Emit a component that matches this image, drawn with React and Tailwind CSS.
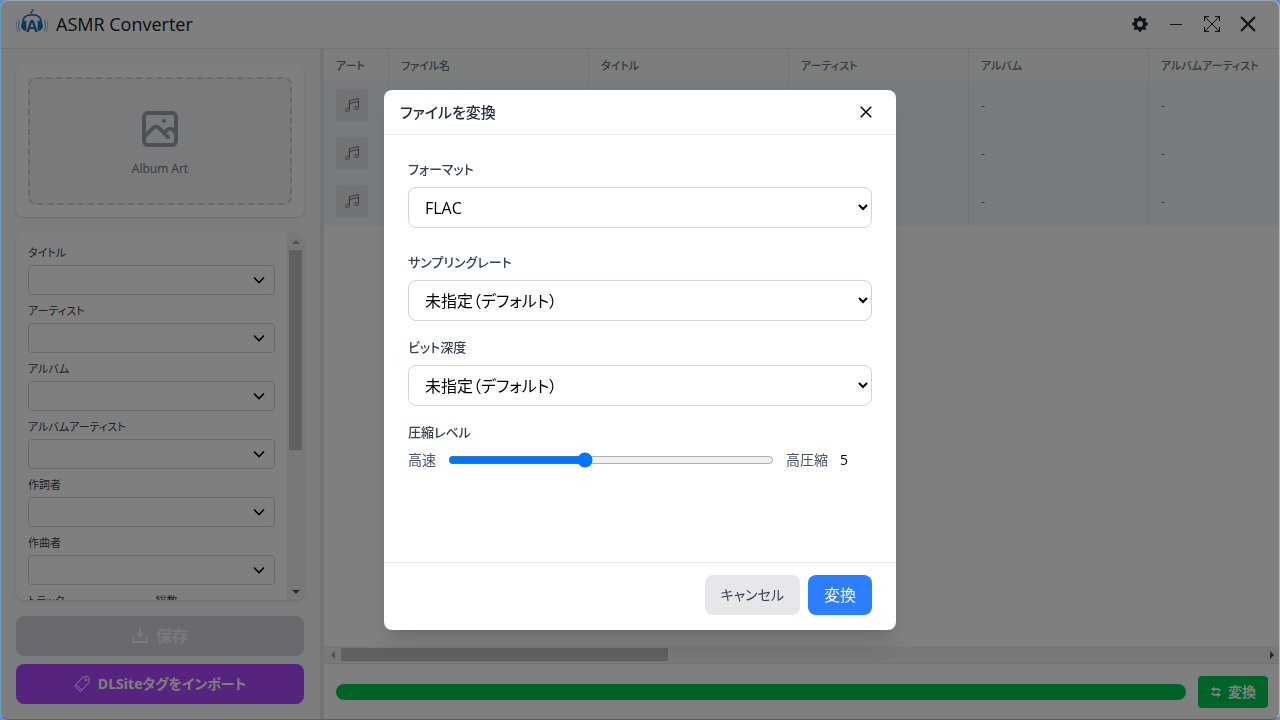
import React, { useState } from 'react';
import { BsGearFill } from 'react-icons/bs';

const FIELDS = ['タイトル', 'アーティスト', 'アルバム', 'アルバムアーティスト', '作詞者', '作曲者'];

const COLUMNS = [
    { label: 'アート', width: 'w-16' },
    { label: 'ファイル名', width: 'w-[200px]' },
    { label: 'タイトル', width: 'w-[200px]' },
    { label: 'アーティスト', width: 'w-[180px]' },
    { label: 'アルバム', width: 'w-[180px]' },
    { label: 'アルバムアーティスト', width: 'w-[180px]' },
];

const FILES = [
    { id: 1, values: ['', '', '', '-', '-'] },
    { id: 2, values: ['', '', '', '-', '-'] },
    { id: 3, values: ['', '', '', '-', '-'] },
];

const Logo = () => (
    <svg viewBox="0 0 32 32" className="w-8 h-8" fill="none" stroke="#0e6fae" strokeLinecap="round">
        <path d="M7 14C7 9 10.500 6.800 16 6.800S25 9 25 14" strokeWidth="1.600" />
        <path d="M10 13v9.500c-2.800 0-4.500-1.800-4.500-4.700S7.200 13 10 13zM22 13v9.500c2.800 0 4.500-1.800 4.500-4.700S24.800 13 22 13z" fill="#0e6fae" strokeWidth="0.600" />
        <path d="M3.600 12.500c-1.500 3-1.500 7.500 0 10.500M28.400 12.500c1.500 3 1.500 7.500 0 10.500" strokeWidth="0.900" opacity="0.700" />
        <path d="M1.800 11c-2 4-2 9 0 13M30.200 11c2 4 2 9 0 13" strokeWidth="0.700" opacity="0.500" />
        <path d="M16 4.500V1.500l1.800 1" strokeWidth="0.900" />
        <circle cx="15.200" cy="4.700" r="0.900" fill="#0e6fae" stroke="none" />
        <text x="16" y="24" textAnchor="middle" fontFamily="Liberation Sans, sans-serif" fontSize="17" fontWeight="700" fill="#0e6fae" stroke="none">A</text>
    </svg>
);

const PhotoIcon = () => (
    <svg viewBox="0 0 24 24" className="w-12 h-12 text-gray-400" fill="none" stroke="currentColor" strokeWidth="2" strokeLinecap="round" strokeLinejoin="round">
        <path d="M4 16l4.586-4.586a2 2 0 012.828 0L16 16m-2-2l1.586-1.586a2 2 0 012.828 0L20 14m-6-6h.01M6 20h12a2 2 0 002-2V6a2 2 0 00-2-2H6a2 2 0 00-2 2v12a2 2 0 002 2z" />
    </svg>
);

const MusicIcon = () => (
    <svg viewBox="0 0 16 16" className="w-4 h-4" fill="none" stroke="currentColor" strokeLinejoin="round">
        <path d="M5.500 12.500V3.500l9-2v9.500M5.500 6.500l9-2" />
        <ellipse cx="3.500" cy="12.700" rx="2" ry="1.600" />
        <ellipse cx="12.500" cy="11.200" rx="2" ry="1.600" />
    </svg>
);

const ExpandIcon = () => (
    <svg viewBox="0 0 16 16" className="w-4 h-4" fill="none" stroke="currentColor">
        <path d="M.5 5V.5H5M11 .5h4.500V5M15.500 11v4.500H11M5 15.500H.5V11M.5.5l15 15M15.500.5l-15 15" />
    </svg>
);

const CloseIcon = ({ className, strokeWidth }) => (
    <svg viewBox="0 0 16 16" className={className} fill="none" stroke="currentColor" strokeWidth={strokeWidth}>
        <path d="M1 1l14 14M15 1L1 15" />
    </svg>
);

const SaveIcon = () => (
    <svg viewBox="0 0 16 16" className="w-4 h-4" fill="none" stroke="currentColor" strokeWidth="2">
        <path d="M1 8v6h14V8" />
        <path d="M8 1v6" />
        <path d="M4.500 6h7L8 10.500z" fill="currentColor" stroke="none" />
    </svg>
);

const TagIcon = () => (
    <svg viewBox="0 0 16 16" className="w-4 h-4" fill="none" stroke="currentColor" strokeLinejoin="round">
        <path d="M8.500 1.500l5.500-1 1 1v5L8 14.200 2 8.700z" />
        <path d="M2 8.700L.8 10.200l5.700 5.300L8 14.200" />
        <circle cx="12" cy="4" r="0.900" />
    </svg>
);

const ConvertIcon = () => (
    <svg viewBox="0 0 12 12" className="w-3 h-3" fill="none" stroke="currentColor" strokeWidth="1.800">
        <path d="M4 3.200h3.500Q9.500 3.200 9.800 5.400M8 8.800H4.500Q2.500 8.800 2.200 6.600" />
        <path d="M4.800.4v5.600L1 3.200zM7.200 6v5.600L11 8.800z" fill="currentColor" stroke="none" />
    </svg>
);

const Field = ({ label }) => (
    <label className="block text-[11px] leading-4 text-gray-700">
        <span className="block mb-1">{label}</span>
        <span className="relative block">
            <select className="block w-full h-[30px] appearance-none rounded border border-gray-300 bg-white px-2" />
            <svg viewBox="0 0 12 8" className="absolute right-2.5 top-[11px] w-3 h-2 pointer-events-none text-black" fill="none" stroke="currentColor" strokeWidth="1.600">
                <path d="M1 1.500l5 5 5-5" />
            </svg>
        </span>
    </label>
);

const Sidebar = () => (
    <aside className="w-80 shrink-0 flex flex-col p-4 bg-gray-50">
        <div className="rounded-lg bg-white p-3 mb-4 shadow-sm">
            <div className="h-32 rounded-lg border-2 border-dashed border-gray-300 bg-gray-100 flex flex-col items-center justify-center gap-2">
                <PhotoIcon />
                <span className="text-xs text-gray-500">Album Art</span>
            </div>
        </div>

        <div className="flex-1 min-h-0 flex rounded-lg bg-white shadow-sm overflow-hidden">
            <div className="flex-1 p-3 flex flex-col gap-2 overflow-hidden">
                {FIELDS.map(label => <Field key={label} label={label} />)}
                <div className="grid grid-cols-2 gap-2">
                    <Field label="トラック" />
                    <Field label="総数" />
                </div>
            </div>
            {/* Scroll bar */}
            <div className="w-[17px] flex flex-col items-center bg-[#f1f1f1]">
                <div className="h-[17px] flex items-center">
                    <div className="border-x-4 border-b-4 border-x-transparent border-b-[#a3a3a3]" />
                </div>
                <div className="w-[13px] h-[200px] bg-[#c1c1c1]" />
                <div className="h-[17px] mt-auto flex items-center">
                    <div className="border-x-4 border-t-4 border-x-transparent border-t-[#505050]" />
                </div>
            </div>
        </div>

        <button disabled className="mt-4 h-10 shrink-0 rounded-lg bg-gray-300 text-gray-100 font-bold flex items-center justify-center gap-2">
            <SaveIcon />
            保存
        </button>
        <button className="mt-2 h-10 shrink-0 rounded-lg bg-purple-500 text-white text-sm font-bold flex items-center justify-center gap-2">
            <TagIcon />
            DLSiteタグをインポート
        </button>
    </aside>
);

const FileTable = () => (
    <div className="flex-1 overflow-hidden">
        <table className="table-fixed border-separate border-spacing-0 w-[1004px] text-xs text-left text-gray-500">
            <thead className="bg-gray-50">
                <tr className="h-8 text-[11px]">
                    {COLUMNS.map(({ label, width }, i) => (
                        <th key={label} className={`${width} px-3 pt-0.5 font-medium ${i > 0 ? 'border-l border-gray-200' : ''}`}>{label}</th>
                    ))}
                </tr>
            </thead>
            <tbody>
                {FILES.map(file => (
                    <tr key={file.id} className="h-12 bg-blue-50">
                        <td className="px-3">
                            <div className="w-8 h-8 rounded bg-gray-200 flex items-center justify-center text-gray-500">
                                <MusicIcon />
                            </div>
                        </td>
                        {file.values.map((value, i) => (
                            <td key={i} className="px-3 pt-0.5 border-l border-gray-200">{value}</td>
                        ))}
                    </tr>
                ))}
            </tbody>
        </table>
    </div>
);

const LabeledSelect = ({ id, label, children }) => (
    <div>
        <label htmlFor={id} className="block mb-2 text-[13px] leading-5 font-medium text-gray-700">{label}</label>
        <select id={id} className="block w-full h-[41px] px-3 rounded-lg border border-gray-300 bg-white text-base text-black">
            {children}
        </select>
    </div>
);

const ConvertDialog = () => {
    const [level, setLevel] = useState(5);

    return (
        <div role="dialog" aria-labelledby="dialog-title" className="w-full max-w-lg h-[75vh] flex flex-col rounded-lg bg-white shadow-xl">
            <div className="h-[45px] shrink-0 px-4 flex items-center justify-between border-b border-gray-200">
                <h2 id="dialog-title" className="text-[15px] font-medium text-gray-800">ファイルを変換</h2>
                <button aria-label="閉じる" className="p-2 text-black">
                    <CloseIcon className="w-3 h-3" strokeWidth="2" />
                </button>
            </div>

            <div className="flex-1 p-6 flex flex-col gap-4">
                <div className="mb-2">
                    <LabeledSelect id="format" label="フォーマット">
                        <option>FLAC</option>
                    </LabeledSelect>
                </div>
                <LabeledSelect id="rate" label="サンプリングレート">
                    <option>未指定（デフォルト）</option>
                </LabeledSelect>
                <LabeledSelect id="depth" label="ビット深度">
                    <option>未指定（デフォルト）</option>
                </LabeledSelect>
                <div>
                    <label htmlFor="level" className="block mb-2 text-[13px] leading-5 font-medium text-gray-700">圧縮レベル</label>
                    <div className="flex items-center gap-3 text-sm text-gray-600">
                        <span>高速</span>
                        <input id="level" type="range" min="0" max="12" value={level} onChange={e => setLevel(Number(e.target.value))} className="flex-1 min-w-0" />
                        <span>高圧縮</span>
                        <span className="w-8 font-medium text-black">{level}</span>
                    </div>
                </div>
            </div>

            <div className="shrink-0 flex justify-end gap-2 border-t border-gray-200 px-6 pt-3 pb-[15px]">
                <button className="h-10 px-4 rounded-lg bg-gray-200 text-gray-700 text-sm">キャンセル</button>
                <button className="h-10 px-4 rounded-lg bg-blue-500 text-white">変換</button>
            </div>
        </div>
    );
};

const App = () => (
    <div className="h-screen bg-[#5f8fc4] font-['Open_Sans','Noto_Sans_CJK_JP',sans-serif] [font-feature-settings:'palt']">
        <div className="h-full flex flex-col rounded-lg bg-white overflow-hidden">
            <header className="h-[49px] shrink-0 pl-4 pr-6 flex items-center justify-between border-b border-gray-200 text-gray-900">
                <div className="flex items-center gap-2">
                    <Logo />
                    <h1 className="text-lg font-medium">ASMR Converter</h1>
                </div>
                <div className="flex items-center gap-5 text-gray-800">
                    <button aria-label="設定"><BsGearFill className="w-4 h-4" /></button>
                    <button aria-label="最小化" className="w-4 h-4 flex items-center justify-center">
                        <span className="w-3 h-px bg-current" />
                    </button>
                    <button aria-label="最大化"><ExpandIcon /></button>
                    <button aria-label="終了"><CloseIcon className="w-4 h-4" strokeWidth="2.200" /></button>
                </div>
            </header>

            <div className="flex-1 min-h-0 flex">
                <Sidebar />
                <div className="w-1 shrink-0 bg-gray-200" />
                <main className="flex-1 min-w-0 flex flex-col">
                    <FileTable />
                    <div className="h-[17px] flex items-center bg-[#f1f1f1]">
                        <div className="w-[17px] flex justify-center">
                            <div className="border-y-4 border-r-4 border-y-transparent border-r-[#a3a3a3]" />
                        </div>
                        <div className="w-[327px] h-[13px] bg-[#c1c1c1]" />
                        <div className="w-[17px] ml-auto flex justify-center">
                            <div className="border-y-4 border-l-4 border-y-transparent border-l-[#505050]" />
                        </div>
                    </div>
                    <footer className="shrink-0 p-3 flex items-center gap-3 border-t border-gray-200">
                        <div className="flex-1 h-4 rounded-full bg-green-500" />
                        <button className="h-8 px-3 rounded bg-green-500 text-white text-sm font-bold flex items-center gap-1.5">
                            <ConvertIcon />
                            変換
                        </button>
                    </footer>
                </main>
            </div>
        </div>

        <div className="fixed inset-0 rounded-lg bg-black/50 flex items-center justify-center">
            <ConvertDialog />
        </div>
        {/* Window edge */}
        <div className="fixed inset-0 pointer-events-none rounded-lg border border-t-[#93a9b5] border-l-[#6d9cc0] border-r-[#a9b8c2] border-b-[#4a5f96]" />
    </div>
);

export default App;
